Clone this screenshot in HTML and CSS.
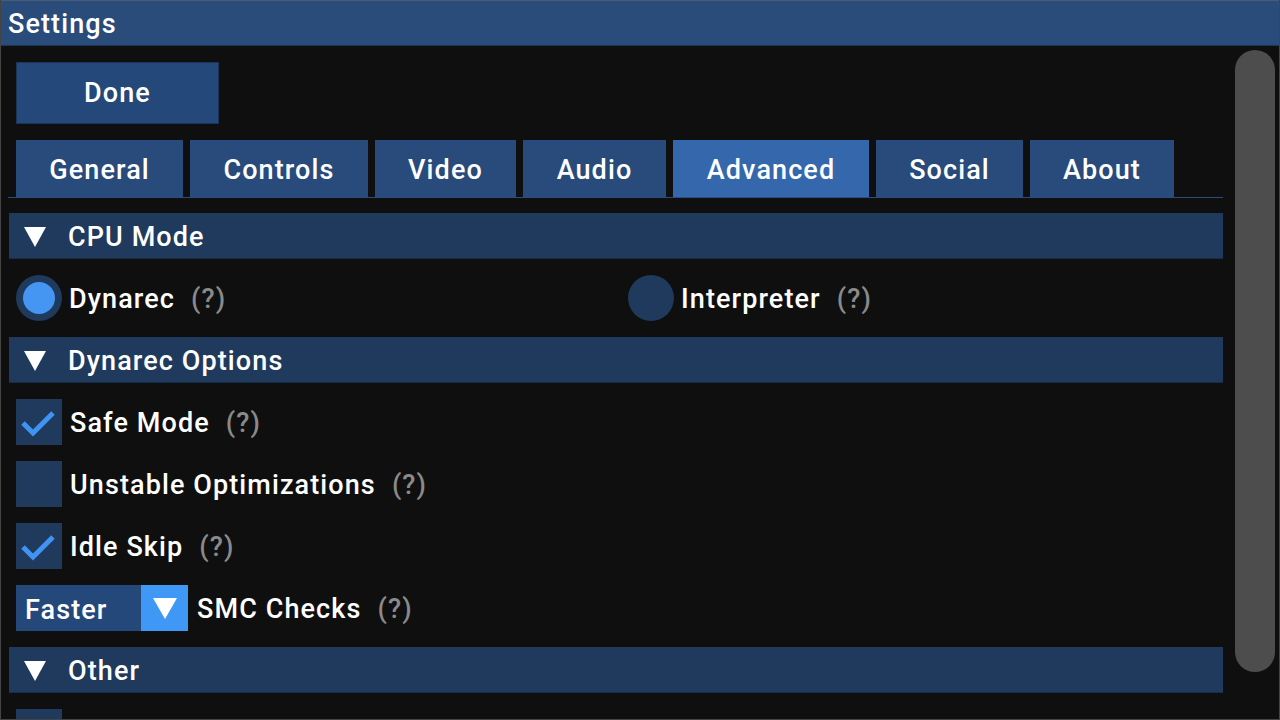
FILE: index.html
```html
<!DOCTYPE html>
<html lang="en">
<head>
  <meta charset="UTF-8">
  <title>Settings</title>
  <link rel="stylesheet" href="styles.css">
</head>
<body>
  <div class="window">
    <div class="titlebar">Settings</div>

    <div class="main">
      <div class="content">
        <button class="done">Done</button>

        <div class="tabs">
          <div class="tab w-general">General</div>
          <div class="tab w-controls">Controls</div>
          <div class="tab w-video">Video</div>
          <div class="tab w-audio">Audio</div>
          <div class="tab active w-advanced">Advanced</div>
          <div class="tab w-social">Social</div>
          <div class="tab w-about">About</div>
        </div>

        <div class="list">
          <div class="header"><span class="tri"></span>CPU Mode</div>
          <div class="row radios">
            <div class="opt">
              <span class="radio on"></span>
              <span class="label">Dynarec</span><span class="help">(?)</span>
            </div>
            <div class="opt">
              <span class="radio"></span>
              <span class="label">Interpreter</span><span class="help">(?)</span>
            </div>
          </div>

          <div class="header"><span class="tri"></span>Dynarec Options</div>
          <div class="row">
            <span class="check on">
              <svg width="46" height="46" viewBox="0 0 46 46"><path d="M7 24 L17 34 L37 14" fill="none" stroke="#3f93f2" stroke-width="5"/></svg>
            </span>
            <span class="label">Safe Mode</span><span class="help">(?)</span>
          </div>
          <div class="row">
            <span class="check"></span>
            <span class="label">Unstable Optimizations</span><span class="help">(?)</span>
          </div>
          <div class="row">
            <span class="check on">
              <svg width="46" height="46" viewBox="0 0 46 46"><path d="M7 24 L17 34 L37 14" fill="none" stroke="#3f93f2" stroke-width="5"/></svg>
            </span>
            <span class="label">Idle Skip</span><span class="help">(?)</span>
          </div>
          <div class="row">
            <div class="select">
              <span class="select-value">Faster</span>
              <span class="select-arrow"><span class="tri small"></span></span>
            </div>
            <span class="label">SMC Checks</span><span class="help">(?)</span>
          </div>

          <div class="header"><span class="tri"></span>Other</div>
          <div class="row">
            <span class="check"></span>
          </div>
        </div>
      </div>

      <div class="scroll">
        <div class="thumb"></div>
      </div>
    </div>
  </div>
</body>
</html>
```

FILE: styles.css
```css
body {
  margin: 0;
  background: #0f0f0f;
  font-family: Roboto, "Noto Sans", sans-serif;
  font-weight: 500;
  letter-spacing: 1.1px;
  color: #fff;
  font-size: 27px;
}

.window {
  width: 1280px;
  height: 720px;
  box-sizing: border-box;
  border: 1px solid #444;
  border-top: none;
  overflow: hidden;
  display: flex;
  flex-direction: column;
}

.titlebar {
  height: 46px;
  flex-shrink: 0;
  background: #294c7b;
  border-bottom: 1px solid #1b3457;
  border-top: 1px solid #4a5a78;
  box-sizing: border-box;
  padding-left: 7px;
  line-height: 47px;
  font-size: 27px;
}

.main {
  flex: 1;
  display: flex;
  overflow: hidden;
}

.content {
  width: 1215px;
  padding: 16px 0 0 7px;
}

.done {
  display: block;
  margin-left: 8px;
  width: 203px;
  height: 62px;
  background: #25487a;
  border: 1px solid #1a3558;
  color: #fff;
  font-family: inherit;
  font-weight: 500;
  letter-spacing: 1.1px;
  font-size: 27px;
  padding: 0;
}

.tabs {
  display: flex;
  gap: 7px;
  margin-top: 16px;
  padding-left: 8px;
  border-bottom: 1px solid #2b4c7c;
  height: 58px;
  box-sizing: border-box;
}

.tab {
  height: 57px;
  background: #284b7b;
  display: flex;
  align-items: center;
  justify-content: center;
  padding-top: 2px;
  box-sizing: border-box;
}

.tab.active { background: #3467ac; }

.w-general { width: 167px; }
.w-controls { width: 178px; }
.w-video { width: 141px; }
.w-audio { width: 143px; }
.w-advanced { width: 196px; }
.w-social { width: 147px; }
.w-about { width: 144px; }

.list {
  display: flex;
  flex-direction: column;
  gap: 16px;
  margin-top: 15px;
}

.header {
  height: 46px;
  margin-left: 1px;
  background: #1f3a5d;
  border-bottom: 1px solid #172c48;
  box-sizing: border-box;
  display: flex;
  align-items: center;
  padding: 2px 0 0 15px;
}

.tri {
  width: 0;
  height: 0;
  border-left: 11px solid transparent;
  border-right: 11px solid transparent;
  border-top: 20px solid #fff;
  margin-right: 22px;
}

.tri.small {
  border-left-width: 12px;
  border-right-width: 12px;
  border-top-width: 21px;
  margin: 0;
}

.row {
  height: 46px;
  display: flex;
  align-items: center;
  padding-left: 8px;
}

.label { padding-top: 2px; }

.radios {
  display: grid;
  grid-template-columns: 612px 1fr;
}

.opt {
  display: flex;
  align-items: center;
}

.radio {
  width: 46px;
  height: 46px;
  border-radius: 50%;
  background: #1f3a5d;
  display: flex;
  align-items: center;
  justify-content: center;
  margin-right: 7px;
}

.radio.on::after {
  content: "";
  width: 32px;
  height: 32px;
  border-radius: 50%;
  background: #4596f2;
}

.check {
  width: 46px;
  height: 46px;
  background: #1f3a5d;
  margin-right: 8px;
}

.check svg { display: block; }

.help {
  color: #8a8a8a;
  margin-left: 16px;
  padding-top: 2px;
}

.select {
  display: flex;
  height: 46px;
  margin-right: 9px;
}

.select-value {
  width: 116px;
  background: #25487a;
  padding: 2px 0 0 9px;
  line-height: 46px;
}

.select-arrow {
  width: 47px;
  background: #4098f6;
  display: flex;
  align-items: center;
  justify-content: center;
}

.scroll {
  flex: 1;
  padding: 4px 3px 0 12px;
}

.thumb {
  width: 40px;
  height: 622px;
  border-radius: 20px;
  background: #4d4d4d;
}
```
